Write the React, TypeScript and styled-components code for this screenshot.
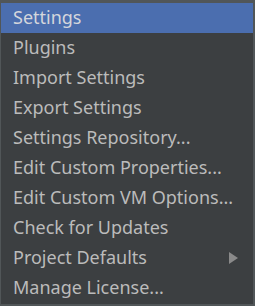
import { FC } from "react";
import styled, { createGlobalStyle } from "styled-components";

const GlobalStyle = createGlobalStyle`
  html, body {
    margin: 0;
    padding: 0;
    background: #3c3f41;
  }
`;

const Menu = styled.div`
  width: 255px;
  height: 306px;
  box-sizing: border-box;
  background: #3c3f41;
  border-style: solid;
  border-color: #515658;
  border-width: 3px 2px 2px 1px;
  display: flex;
  flex-direction: column;
  font-family: "Noto Sans", sans-serif;
  font-size: 18px;
`;

const Item = styled.div<{ $active?: boolean }>`
  height: 30px;
  box-sizing: border-box;
  flex-shrink: 0;
  display: flex;
  align-items: center;
  justify-content: space-between;
  padding: 0 15px 3px 12px;
  background: ${(p) => (p.$active ? "#4b6eaf" : "transparent")};
  color: ${(p) => (p.$active ? "#d4d6dc" : "#bbbbbb")};
  white-space: nowrap;
`;

const Arrow = styled.span`
  width: 0;
  height: 0;
  margin-top: 3px;
  border-top: 6px solid transparent;
  border-bottom: 6px solid transparent;
  border-left: 9px solid #8a8a8a;
`;

const items = [
  "Settings",
  "Plugins",
  "Import Settings",
  "Export Settings",
  "Settings Repository...",
  "Edit Custom Properties...",
  "Edit Custom VM Options...",
  "Check for Updates",
  "Project Defaults",
  "Manage License...",
];

const App: FC = () => {
  return (
    <>
      <GlobalStyle />
      <Menu>
        {items.map((label, i) => (
          <Item key={label} $active={i === 0}>
            <span>{label}</span>
            {label === "Project Defaults" && <Arrow />}
          </Item>
        ))}
      </Menu>
    </>
  );
};

export default App;
